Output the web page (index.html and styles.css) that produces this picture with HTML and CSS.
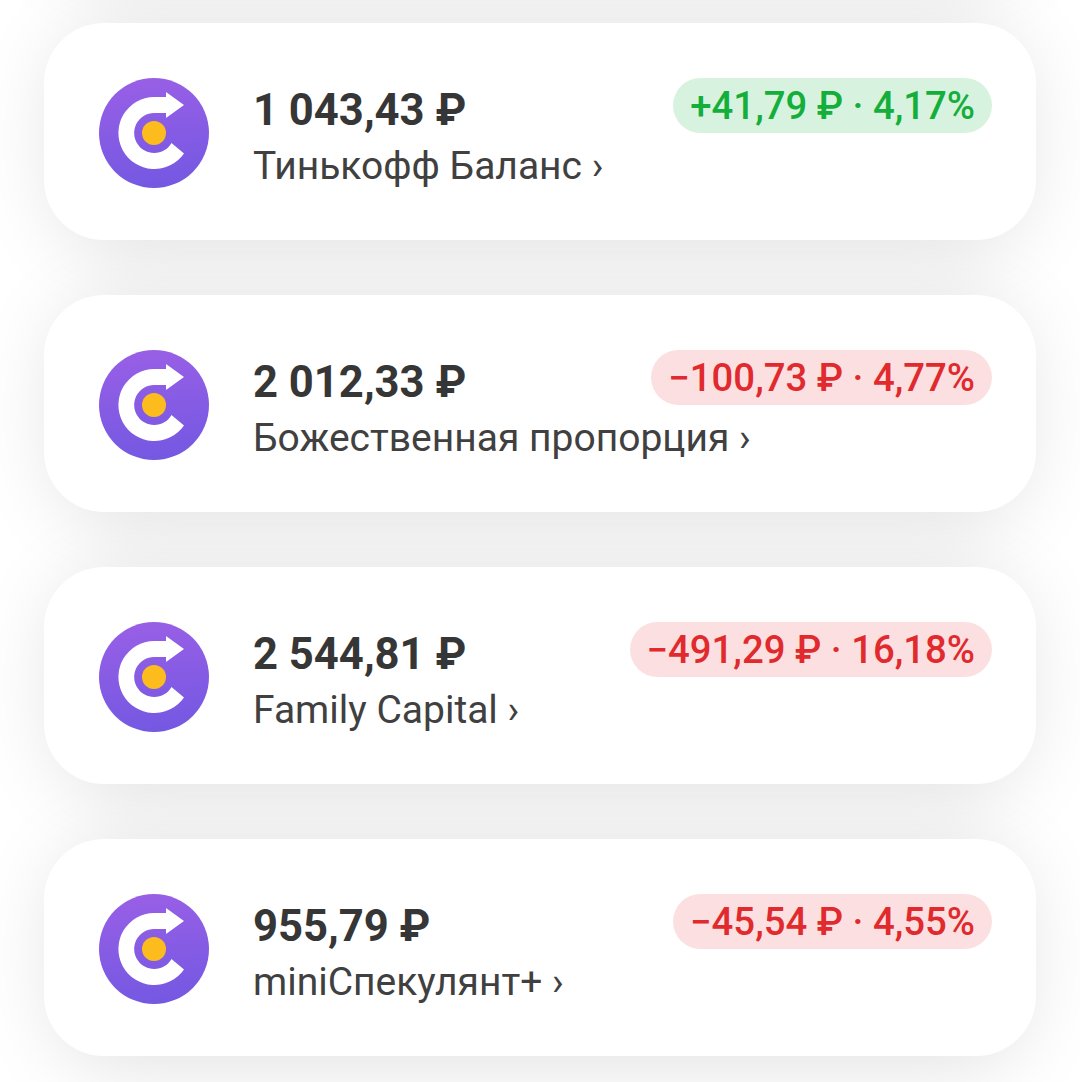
FILE: index.html
```html
<!DOCTYPE html>
<html lang="ru">
<head>
    <meta charset="UTF-8">
    <meta name="viewport" content="width=device-width, initial-scale=1.0">
    <title>Портфели</title>
    <link rel="stylesheet" href="styles.css">
</head>
<body>
    <svg class="sprite" width="0" height="0" aria-hidden="true">
        <defs>
            <linearGradient id="logoGradient" x1="0.45" y1="0" x2="0.55" y2="1">
                <stop offset="0" stop-color="#985fe6"/>
                <stop offset="1" stop-color="#7458e2"/>
            </linearGradient>
            <symbol id="logo" viewBox="0 0 110 110">
                <circle cx="55" cy="55" r="55" fill="url(#logoGradient)"/>
                <path fill="#fff" d="M67 14 L85 27 L67 40 V35 H55 A20 20 0 1 0 72.5 65 L85 75.5 A36 36 0 1 1 55 19 H67 Z"/>
                <circle cx="55" cy="55" r="12" fill="#fdbc1e"/>
            </symbol>
        </defs>
    </svg>

    <main class="list">
        <!-- previous card, scrolled off the top of the screen -->
        <section class="card" aria-hidden="true"></section>

        <!-- Тинькофф Баланс -->
        <section class="card">
            <svg class="logo"><use href="#logo"/></svg>
            <div class="info">
                <div class="amount">1 043,43 ₽</div>
                <div class="name">Тинькофф Баланс ›</div>
            </div>
            <div class="pill pill-up">+41,79 ₽ · 4,17%</div>
        </section>

        <!-- Божественная пропорция -->
        <section class="card">
            <svg class="logo"><use href="#logo"/></svg>
            <div class="info">
                <div class="amount">2 012,33 ₽</div>
                <div class="name">Божественная пропорция ›</div>
            </div>
            <div class="pill pill-down">−100,73 ₽ · 4,77%</div>
        </section>

        <!-- Family Capital -->
        <section class="card">
            <svg class="logo"><use href="#logo"/></svg>
            <div class="info">
                <div class="amount">2 544,81 ₽</div>
                <div class="name">Family Capital ›</div>
            </div>
            <div class="pill pill-down">−491,29 ₽ · 16,18%</div>
        </section>

        <!-- miniСпекулянт+ -->
        <section class="card">
            <svg class="logo"><use href="#logo"/></svg>
            <div class="info">
                <div class="amount">955,79 ₽</div>
                <div class="name">miniСпекулянт+ ›</div>
            </div>
            <div class="pill pill-down">−45,54 ₽ · 4,55%</div>
        </section>
    </main>
</body>
</html>
```

FILE: styles.css
```css
html, body {
    height: 100%;
}

body {
    font-family: Roboto, "Noto Sans", sans-serif;
    margin: 0;
    padding: 0;
    background-color: #fff;
    color: #363636;
    overflow: hidden;
}

.sprite {
    position: absolute;
}

.list {
    display: flex;
    flex-direction: column;
    gap: 55px;
    margin-top: -249px;
    padding: 0 44px;
    isolation: isolate;
}

.card {
    position: relative;
    display: flex;
    flex: none;
    align-items: flex-start;
    height: 217px;
    box-sizing: border-box;
    padding: 55px 44px 0 55px;
    background-color: #fff;
    border-radius: 60px;
}

/* shadow sits behind every card, so the next card doesn't darken the previous one */
.card::before {
    content: "";
    position: absolute;
    inset: 0 12px;
    z-index: -1;
    border-radius: 60px;
    box-shadow: 0 8px 80px rgba(0, 0, 0, 0.125);
}

.logo {
    flex: none;
    width: 110px;
    height: 110px;
    margin-right: 44px;
}

.info {
    flex: 1;
    min-width: 0;
    white-space: nowrap;
}

.amount {
    margin-top: 8px;
    font-size: 43.6px;
    line-height: 50px;
    font-weight: 700;
}

.name {
    margin-top: 8px;
    font-size: 39px;
    line-height: 44px;
    color: #404040;
}

.pill {
    flex: none;
    height: 55px;
    padding: 0 17px;
    border-radius: 28px;
    font-size: 38.3px;
    line-height: 55px;
    font-weight: 500;
    white-space: nowrap;
}

.pill-up {
    background-color: #d7f3df;
    color: #14ae3b;
}

.pill-down {
    background-color: #fce0e1;
    color: #e02a2d;
}
```
